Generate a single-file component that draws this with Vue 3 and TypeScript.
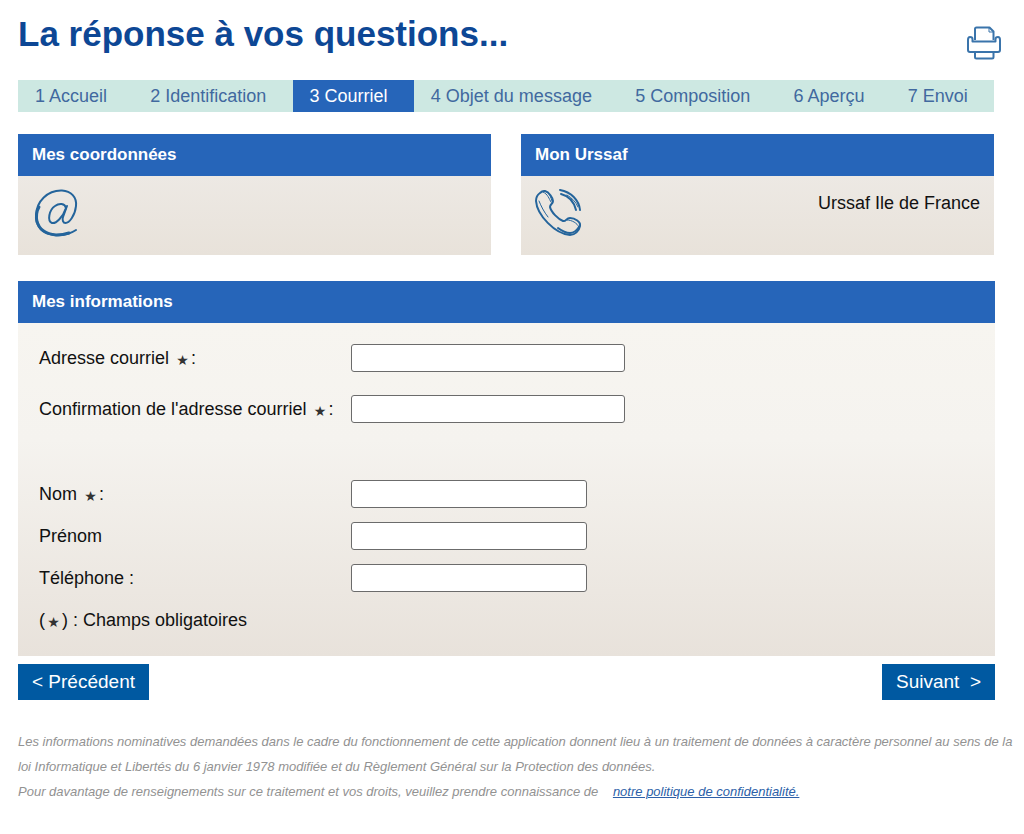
<script setup lang="ts">
import { reactive } from 'vue'

interface Step {
  label: string
  active?: boolean
}

interface Field {
  id: 'email' | 'confirm' | 'lastName' | 'firstName' | 'phone'
  label: string
  required: boolean
  colon: boolean
  type: string
}

const steps: Step[] = [
  { label: '1 Accueil' },
  { label: '2 Identification' },
  { label: '3 Courriel', active: true },
  { label: '4 Objet du message' },
  { label: '5 Composition' },
  { label: '6 Aperçu' },
  { label: '7 Envoi' },
]

const emailFields: Field[] = [
  { id: 'email', label: 'Adresse courriel', required: true, colon: true, type: 'email' },
  { id: 'confirm', label: "Confirmation de l'adresse courriel", required: true, colon: true, type: 'email' },
]

const personFields: Field[] = [
  { id: 'lastName', label: 'Nom', required: true, colon: true, type: 'text' },
  { id: 'firstName', label: 'Prénom', required: false, colon: false, type: 'text' },
  { id: 'phone', label: 'Téléphone', required: false, colon: true, type: 'tel' },
]

const form = reactive({ email: '', confirm: '', lastName: '', firstName: '', phone: '' })
</script>

<template>
  <div class="page">
    <header class="top">
      <h1>La réponse à vos questions...</h1>
      <button type="button" class="print" aria-label="Imprimer">
        <svg viewBox="0 0 36 34" width="36" height="34" fill="none" stroke="#3a74ab" stroke-width="2" stroke-linejoin="round">
          <path d="M9 14V3Q9 1.500 10.500 1.500H23.500L27.500 5.500V14" />
          <path d="M23 2V6H27" stroke-width="1" />
          <path d="M9 26H4Q2 26 2 24V14Q2 11 4 11Q6.500 11 6.500 13V15.500H29.500V13Q29.500 11 32 11Q34 11 34 14V24Q34 26 32 26H27.500" />
          <path d="M9 26H27.500V31Q27.500 32.500 26 32.500H10.500Q9 32.500 9 31Z" />
        </svg>
      </button>
    </header>

    <nav class="steps">
      <a v-for="s in steps" :key="s.label" href="#" :class="{ active: s.active }">{{ s.label }}</a>
    </nav>

    <div class="cards">
      <section class="card">
        <h2>Mes coordonnées</h2>
        <div class="card-body">
          <svg viewBox="0 0 46 50" width="46" height="50" fill="none" stroke="#24649b" stroke-linecap="round">
            <path d="M44 42C38 46 31 48 23 47C11 46 4 39 4 28C4 13 16 2 30 2.500C39 3 45 9 44 18C43 28 37 35 33.500 35C31 35 30 32 31 29L35 18" stroke-width="2" />
            <path d="M5 33C7 42 14 46 24 47C30 47 34 46 37 45M7 19C4 24 4 29 5 34" stroke-width="3" />
            <path d="M34 20C33 15 27 15 23 18C17 22 15 33 20 35C24 36 31 29 34 20" stroke-width="2" />
          </svg>
        </div>
      </section>
      <section class="card">
        <h2>Mon Urssaf</h2>
        <div class="card-body">
          <svg viewBox="0 0 46 50" width="46" height="50" fill="none" stroke="#24649b" stroke-linecap="round" stroke-linejoin="round" stroke-width="1">
            <path d="M5 5C7 3 8 2.500 10 3C14 4 18 10 18 13C18 16 15 16 15 19C16 24 23 31 28 33C31 34 31 30 35 30C40 30 46 34 45 38C44 43 40 47 35 47C20 46 2 27 1 13C1 10 2 7 5 5Z" stroke-width="2" />
            <path d="M4 13C6 18 9 24 13 29M8 4C13 6 14 11 16 14M12 4C15 6 16 10 17 13M32 32C37 32 42 35 44 39" />
            <path d="M44 39C42 42 39 45 35 45C31 45 27 43 23 40" stroke-width="2" />
            <path d="M25 2C36 4 44 12 45 22M26 6C34 8 39 14 41 22" stroke-width="2" />
            <path d="M32 7C37 10 41 14 43 19" />
          </svg>
          <p>Urssaf Ile de France</p>
        </div>
      </section>
    </div>

    <form @submit.prevent>
      <section class="info">
        <h2>Mes informations</h2>
        <div class="info-body">
          <div class="group emails">
            <div v-for="f in emailFields" :key="f.id" class="row">
              <label :for="f.id">{{ f.label }} <span v-if="f.required" class="star">★</span><template v-if="f.colon">:</template></label>
              <input :id="f.id" v-model="form[f.id]" :type="f.type" class="wide" />
            </div>
          </div>
          <div class="group">
            <div v-for="f in personFields" :key="f.id" class="row">
              <label :for="f.id">{{ f.label }} <span v-if="f.required" class="star">★</span><template v-if="f.colon">:</template></label>
              <input :id="f.id" v-model="form[f.id]" :type="f.type" />
            </div>
            <p class="note">(<span class="star">★</span>) : Champs obligatoires</p>
          </div>
        </div>
      </section>

      <div class="actions">
        <button type="button">&lt; Précédent</button>
        <button type="submit">Suivant&nbsp; &gt;</button>
      </div>
    </form>

    <footer>
      <p>Les informations nominatives demandées dans le cadre du fonctionnement de cette application donnent lieu à un traitement de données à caractère personnel au sens de la loi Informatique et Libertés du 6 janvier 1978 modifiée et du Règlement Général sur la Protection des données.</p>
      <p>Pour davantage de renseignements sur ce traitement et vos droits, veuillez prendre connaissance de <a href="#">notre politique de confidentialité.</a></p>
    </footer>
  </div>
</template>

<style>
body {
  margin: 0;
  background: #fff;
}
</style>

<style scoped>
.page {
  box-sizing: border-box;
  padding: 13px 8px 24px 18px;
  font-family: "Liberation Sans", Arial, sans-serif;
  font-size: 18px;
  line-height: 24px;
  color: #111;
}

h1,
h2,
p {
  margin: 0;
}

.top {
  display: flex;
  justify-content: space-between;
  align-items: flex-start;
  margin-right: 14px;
}

h1 {
  font-size: 35px;
  line-height: 42px;
  color: #0d4795;
}

.print {
  display: flex;
  margin-top: 13px;
  padding: 0;
  border: 0;
  background: none;
}

.steps,
.cards {
  margin-right: 22px;
}

form {
  margin-right: 21px;
}

.steps {
  display: flex;
  margin-top: 20px;
  background: #cde8e2;
}

.steps a {
  flex: 1 1 auto;
  padding: 4px 22px 4px 17px;
  color: #41699f;
  text-decoration: none;
  white-space: nowrap;
}

.steps a.active {
  background: #2665b9;
  color: #fff;
}

.cards {
  display: grid;
  grid-template-columns: 1fr 1fr;
  gap: 30px;
  margin-top: 22px;
}

h2 {
  padding: 9px 14px;
  background: #2665b9;
  color: #fff;
  font-size: 17px;
  line-height: 24px;
}

.card-body {
  display: flex;
  justify-content: space-between;
  align-items: flex-start;
  min-height: 51px;
  padding: 12px 14px 16px;
  background: linear-gradient(#ede9e4, #e8e2da);
}

.card-body p {
  padding-top: 3px;
}

.info {
  margin-top: 26px;
}

.info-body {
  padding: 21px 21px 22px;
  background: linear-gradient(#f7f5f0, #f5f3ef 35%, #e8e2db);
}

.group {
  display: grid;
  gap: 14px;
}

.emails {
  gap: 23px;
  margin-bottom: 57px;
}

.row {
  display: grid;
  grid-template-columns: 312px 1fr;
  align-items: center;
}

.star {
  display: inline-block;
  width: 17px;
  font-family: "DejaVu Sans", sans-serif;
  font-size: 14px;
  line-height: 16px;
  text-align: center;
  vertical-align: -1px;
  color: #333;
}

input {
  box-sizing: border-box;
  width: 236px;
  height: 28px;
  padding: 2px 4px;
  border: 1px solid #6b6b6b;
  border-radius: 3px;
  background: #fff;
  font: inherit;
}

input.wide {
  width: 274px;
}

.note {
  line-height: 28px;
}

.actions {
  display: flex;
  justify-content: space-between;
  margin-top: 8px;
}

.actions button {
  padding: 6px 14px;
  border: 0;
  background: #0059a1;
  color: #fff;
  font: inherit;
  font-size: 19px;
}

footer {
  margin-top: 29px;
  font-size: 13px;
  line-height: 25px;
  font-style: italic;
  color: #929292;
}

footer a {
  margin-left: 11px;
  color: #2c5fa8;
}
</style>
